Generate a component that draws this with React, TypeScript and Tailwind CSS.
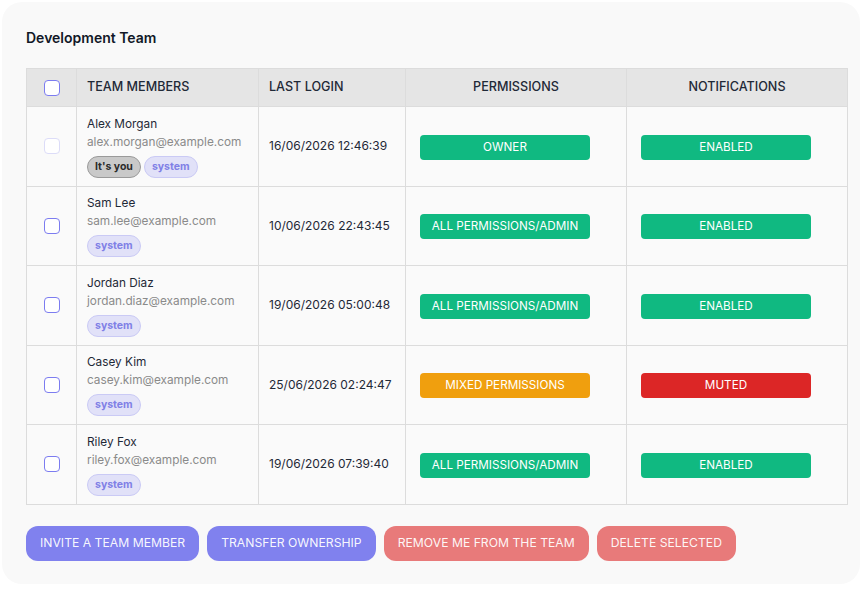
import React from 'react';

type Tone = 'green' | 'amber' | 'red';

interface Member {
  name: string;
  email: string;
  lastLogin: string;
  permission: string;
  permTone: Tone;
  notify: string;
  notifyTone: Tone;
  isYou?: boolean;
}

const members: Member[] = [
  { name: 'Alex Morgan', email: 'alex.morgan@example.com', lastLogin: '16/06/2026 12:46:39', permission: 'OWNER', permTone: 'green', notify: 'ENABLED', notifyTone: 'green', isYou: true },
  { name: 'Sam Lee', email: 'sam.lee@example.com', lastLogin: '10/06/2026 22:43:45', permission: 'ALL PERMISSIONS/ADMIN', permTone: 'green', notify: 'ENABLED', notifyTone: 'green' },
  { name: 'Jordan Diaz', email: 'jordan.diaz@example.com', lastLogin: '19/06/2026 05:00:48', permission: 'ALL PERMISSIONS/ADMIN', permTone: 'green', notify: 'ENABLED', notifyTone: 'green' },
  { name: 'Casey Kim', email: 'casey.kim@example.com', lastLogin: '25/06/2026 02:24:47', permission: 'MIXED PERMISSIONS', permTone: 'amber', notify: 'MUTED', notifyTone: 'red' },
  { name: 'Riley Fox', email: 'riley.fox@example.com', lastLogin: '19/06/2026 07:39:40', permission: 'ALL PERMISSIONS/ADMIN', permTone: 'green', notify: 'ENABLED', notifyTone: 'green' },
];

const toneClass: Record<Tone, string> = {
  green: 'bg-[#10b981]',
  amber: 'bg-[#f09f0e]',
  red: 'bg-[#dc2626]',
};

const Pill: React.FC<{ label: string; tone: Tone }> = ({ label, tone }) => (
  <span className={`inline-flex items-center justify-center min-w-[170px] h-[25px] px-[10px] rounded-[4px] text-white text-[11.7px] ${toneClass[tone]}`}>
    {label}
  </span>
);

const Checkbox: React.FC<{ disabled?: boolean }> = ({ disabled }) => (
  <span
    className={`block w-4 h-4 rounded-[4px] border bg-white ${disabled ? 'border-[#dcdcf8]' : 'border-[#7c7cf0]'}`}
  />
);

const cell = 'border border-[#dcdcdc] align-middle';

export default function App() {
  return (
    <div className="min-h-screen bg-white p-[2px]" style={{ fontFamily: 'Inter, "Noto Sans", sans-serif' }}>
      <div className="w-[858px] h-[582px] rounded-[20px] bg-[#f9f9f9] pl-6 pt-[28px]">
        <h2 className="text-[14px] font-semibold text-[#111827] leading-[16px]">Development Team</h2>

        <table className="mt-[22px] w-[821px] border-collapse table-fixed text-[#1f2937]">
          <colgroup>
            <col className="w-[50px]" />
            <col className="w-[182px]" />
            <col className="w-[147px]" />
            <col className="w-[221px]" />
            <col className="w-[221px]" />
          </colgroup>
          <thead>
            <tr className="bg-[#e5e5e5] h-[38px] text-[12.6px]">
              <th className={`${cell} border-[#d4d4d4]`}>
                <div className="flex justify-center"><Checkbox /></div>
              </th>
              <th className={`${cell} border-[#d4d4d4] text-left px-[10px] font-medium`}>TEAM MEMBERS</th>
              <th className={`${cell} border-[#d4d4d4] text-left px-[10px] font-medium`}>LAST LOGIN</th>
              <th className={`${cell} border-[#d4d4d4] text-center font-medium`}>PERMISSIONS</th>
              <th className={`${cell} border-[#d4d4d4] text-center font-medium`}>NOTIFICATIONS</th>
            </tr>
          </thead>
          <tbody className="bg-[#fafafa]">
            {members.map((m) => (
              <tr key={m.email} className="h-[79.5px]">
                <td className={cell}>
                  <div className="flex justify-center"><Checkbox disabled={m.isYou} /></div>
                </td>
                <td className={`${cell} px-[10px] py-[6px]`}>
                  <div className="text-[11.8px] leading-[18px] text-[#1f2937]">{m.name}</div>
                  <div className="text-[11.8px] leading-[18px] text-[#8a8a8a]">{m.email}</div>
                  <div className="mt-[5px] flex gap-[3px]">
                    {m.isYou && (
                      <span className="h-[22px] px-[7px] inline-flex items-center rounded-full bg-[#c9c9c9] border border-[#9a9a9a] text-[10.5px] font-bold text-[#2b2b2b]">
                        It's you
                      </span>
                    )}
                    <span className="h-[22px] px-[7px] inline-flex items-center rounded-full bg-[#e1e1f8] border border-[#cacaf5] text-[10.5px] font-bold text-[#8080e6]">
                      system
                    </span>
                  </div>
                </td>
                <td className={`${cell} px-[10px] text-[12px] text-[#1f2937]`}>{m.lastLogin}</td>
                <td className={`${cell} pl-[14px]`}>
                  <Pill label={m.permission} tone={m.permTone} />
                </td>
                <td className={`${cell} pl-[14px]`}>
                  <Pill label={m.notify} tone={m.notifyTone} />
                </td>
              </tr>
            ))}
          </tbody>
        </table>

        <div className="mt-[21px] flex gap-2 text-[12.2px] text-white/95">
          <button className="h-[35px] px-[14px] rounded-[12px] bg-[#8081ee]">INVITE A TEAM MEMBER</button>
          <button className="h-[35px] px-[14px] rounded-[12px] bg-[#8081ee]">TRANSFER OWNERSHIP</button>
          <button className="h-[35px] px-[14px] rounded-[12px] bg-[#e87a7a]">REMOVE ME FROM THE TEAM</button>
          <button className="h-[35px] px-[14px] rounded-[12px] bg-[#e87a7a]">DELETE SELECTED</button>
        </div>
      </div>
    </div>
  );
}
